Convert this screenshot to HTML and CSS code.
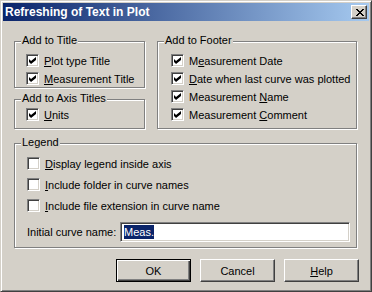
FILE: index.html
```html
<!doctype html>
<html lang="en">
<head>
    <meta charset="UTF-8">
    <title>Refreshing of Text in Plot</title>
    <link rel="stylesheet" href="styles.css">
</head>
<body>
<div class="window">
    <div class="titlebar">
        <span class="title">Refreshing of Text in Plot</span>
        <span class="close-btn">
            <svg width="8" height="7" viewBox="0 0 8 7"><path d="M0 0h2v1H0z M6 0h2v1H6z M1 1h2v1H1z M5 1h2v1H5z M2 2h4v1H2z M3 3h2v1H3z M2 4h4v1H2z M1 5h2v1H1z M5 5h2v1H5z M0 6h2v1H0z M6 6h2v1H6z" fill="#000"/></svg>
        </span>
    </div>

    <div class="client">
        <div class="top-row">
            <div class="col-left">
                <div class="group group-title">
                    <span class="group-label">Add to Title</span>
                    <div class="check-row"><span class="check on"></span><span><u>P</u>lot type Title</span></div>
                    <div class="check-row"><span class="check on"></span><span><u>M</u>easurement Title</span></div>
                </div>
                <div class="group group-axis">
                    <span class="group-label">Add to Axis Titles</span>
                    <div class="check-row"><span class="check on"></span><span><u>U</u>nits</span></div>
                </div>
            </div>
            <div class="group group-footer">
                <span class="group-label">Add to Footer</span>
                <div class="check-row"><span class="check on"></span><span>M<u>e</u>asurement Date</span></div>
                <div class="check-row"><span class="check on"></span><span><u>D</u>ate when last curve was plotted</span></div>
                <div class="check-row"><span class="check on"></span><span>Measurement <u>N</u>ame</span></div>
                <div class="check-row"><span class="check on"></span><span>Measurement <u>C</u>omment</span></div>
            </div>
        </div>

        <div class="group group-legend">
            <span class="group-label">Legend</span>
            <div class="check-row"><span class="check"></span><span><u>D</u>isplay legend inside axis</span></div>
            <div class="check-row"><span class="check"></span><span><u>I</u>nclude folder in curve names</span></div>
            <div class="check-row"><span class="check"></span><span><u>I</u>nclude file extension in curve name</span></div>
            <div class="name-row">
                <span class="name-label">Initial curve name:</span>
                <div class="textbox"><span class="selected">Meas.</span></div>
            </div>
        </div>

        <div class="buttons">
            <button class="btn default" type="button">OK</button>
            <button class="btn" type="button">Cancel</button>
            <button class="btn" type="button"><u>H</u>elp</button>
        </div>
    </div>
</div>
</body>
</html>
```

FILE: styles.css
```css
body {
    margin: 0;
    font-family: "Liberation Sans", Arial, sans-serif;
    font-size: 11px;
    color: #000;
    background: #d4d0c8;
}

.window {
    width: 372px;
    height: 292px;
    box-sizing: border-box;
    padding: 2px;
    background: #d4d0c8;
    border: 1px solid;
    border-color: #d4d0c8 #404040 #404040 #d4d0c8;
    box-shadow: inset 1px 1px #fff, inset -1px -1px #808080;
}

/* caption */
.titlebar {
    height: 18px;
    display: flex;
    align-items: center;
    justify-content: space-between;
    padding: 0 2px 0 2px;
    background: linear-gradient(to right, #0a246a, #a6caf0);
}

.title {
    color: #fff;
    font-weight: bold;
    font-size: 12px;
}

.close-btn {
    width: 16px;
    height: 14px;
    box-sizing: border-box;
    display: flex;
    align-items: center;
    justify-content: center;
    padding-left: 1px;
    padding-top: 1px;
    background: #d4d0c8;
    border: 1px solid;
    border-color: #fff #404040 #404040 #fff;
    box-shadow: inset -1px -1px #808080;
}

.close-btn svg {
    display: block;
    shape-rendering: crispEdges;
}

/* dialog body */
.client {
    padding: 20px 12px 0 11px;
}

.top-row {
    display: flex;
    gap: 12px;
}

.col-left {
    display: flex;
    flex-direction: column;
    gap: 11px;
}

.group {
    position: relative;
    box-sizing: border-box;
    border: 1px solid #808080;
    box-shadow: inset 1px 1px #fff, 1px 1px #fff;
}

.group-label {
    position: absolute;
    top: -9px;
    left: 6px;
    padding: 0 1px;
    line-height: 14px;
    background: #d4d0c8;
}

.group-title {
    width: 131px;
    height: 47px;
    padding: 10px 0 0 11px;
}

.group-axis {
    width: 131px;
    height: 30px;
    padding: 6px 0 0 11px;
}

.group-footer {
    width: 200px;
    height: 88px;
    padding: 10px 0 0 13px;
}

.group-title .check-row + .check-row,
.group-footer .check-row + .check-row {
    margin-top: 1px;
}

.group-legend {
    margin-top: 14px;
    height: 105px;
    padding: 11px 0 0 12px;
}

.group-legend .check-row + .check-row {
    margin-top: 4px;
}

.check-row {
    display: flex;
    align-items: center;
    height: 17px;
    white-space: nowrap;
}

u {
    text-underline-offset: 1px;
}

/* sunken checkbox */
.check {
    position: relative;
    flex: none;
    width: 13px;
    height: 13px;
    box-sizing: border-box;
    margin-right: 5px;
    background: #fff;
    border: 1px solid;
    border-color: #808080 #fff #fff #808080;
    box-shadow: inset 1px 1px #404040, inset -1px -1px #d4d0c8;
}

.check.on::after {
    content: "";
    position: absolute;
    left: 2px;
    top: 2px;
    width: 7px;
    height: 7px;
    background: #000;
    clip-path: polygon(0 29%, 29% 57%, 100% 0, 100% 43%, 29% 100%, 0 71%);
}

.name-row {
    display: flex;
    align-items: center;
    margin-top: 8px;
}

.name-label {
    width: 93px;
}

.textbox {
    width: 230px;
    height: 20px;
    box-sizing: border-box;
    display: flex;
    align-items: center;
    padding-left: 3px;
    background: #fff;
    border: 1px solid;
    border-color: #808080 #fff #fff #808080;
    box-shadow: inset 1px 1px #404040, inset -1px -1px #d4d0c8;
}

.selected {
    background: #0a246a;
    color: #fff;
    line-height: 14px;
}

/* push buttons */
.buttons {
    display: flex;
    justify-content: flex-end;
    gap: 9px;
    margin-top: 11px;
    margin-right: -2px;
}

.btn {
    width: 75px;
    height: 23px;
    box-sizing: border-box;
    padding: 0;
    font-family: inherit;
    font-size: 11px;
    color: #000;
    background: #d4d0c8;
    border: 1px solid;
    border-color: #fff #404040 #404040 #fff;
    box-shadow: inset -1px -1px #808080;
}

.btn.default {
    border-color: #000;
    box-shadow: inset 1px 1px #fff, inset -1px -1px #404040, inset -2px -2px #808080;
}
```
